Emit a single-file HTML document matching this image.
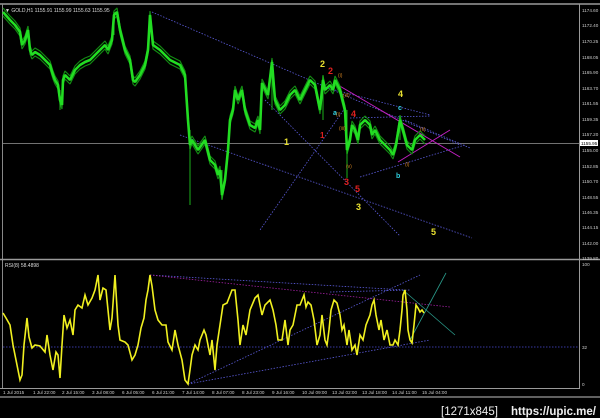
<!DOCTYPE html>
<html><head><style>
body{margin:0;background:#000;width:600px;height:418px;overflow:hidden}
svg{display:block}
text{font-family:"Liberation Sans",sans-serif}
</style></head><body>
<svg width="600" height="418" viewBox="0 0 600 418">
<rect width="600" height="418" fill="#000"/>
<line x1="0" y1="4" x2="600" y2="4" stroke="#9a9a9a" stroke-width="1.5"/>
<line x1="2.5" y1="4" x2="2.5" y2="389" stroke="#888" stroke-width="1"/>
<line x1="579.5" y1="4" x2="579.5" y2="389" stroke="#9a9a9a" stroke-width="1"/>
<line x1="0" y1="259.5" x2="600" y2="259.5" stroke="#9a9a9a" stroke-width="1.5"/>
<line x1="0" y1="388.5" x2="580" y2="388.5" stroke="#9a9a9a" stroke-width="1"/>
<line x1="0" y1="397" x2="600" y2="397" stroke="#9a9a9a" stroke-width="1.2"/>
<line x1="3" y1="143.5" x2="579" y2="143.5" stroke="#999" stroke-width="0.8"/>
<text x="5" y="12" fill="#ddd" font-size="5">▼ GOLD,H1  1155.91 1155.99 1155.63 1155.95</text>
<g stroke="#5a5ad8" stroke-width="0.8" stroke-dasharray="1.5,1.5" fill="none">
<line x1="152" y1="12" x2="460" y2="145"/>
<line x1="180" y1="135" x2="472" y2="238"/>
<line x1="335" y1="90" x2="430" y2="115"/>
<line x1="350" y1="118" x2="430" y2="116"/>
<line x1="360" y1="177" x2="465" y2="145"/>
<line x1="265" y1="100" x2="400" y2="236"/>
<line x1="345" y1="108" x2="260" y2="230"/>
<line x1="405" y1="120" x2="470" y2="148"/>
</g>
<g stroke="#c020c0" stroke-width="1" fill="none">
<line x1="338" y1="85" x2="460" y2="157"/>
<line x1="398" y1="162" x2="450" y2="130"/>
</g>
<g fill="none" stroke-linejoin="bevel">
<polyline stroke="#138a13" stroke-width="1.2" transform="translate(0,4)" points="3,12 10,20 15,25 20,32 22,45 25,40 28,30 30,50 32,55 35,52 40,55 45,60 50,65 53,75 55,80 58,85 60,100 62,105 63,80 65,75 70,80 75,70 80,65 85,62 90,60 95,55 100,50 105,45 108,50 112,40 114,15 117,12 120,30 125,50 130,60 133,80 135,82 140,75 145,65 148,50 150,15 153,45 160,50 170,60 180,65 185,75 188,120 190,145 192,140 198,150 205,140 210,160 215,165 218,175 220,170 222,195 225,180 228,150 230,120 233,110 235,90 238,100 242,90 245,110 250,125 255,128 258,120 260,130 262,83 268,95 272,62 275,100 280,110 285,105 290,95 295,90 300,100 305,90 310,80 315,85 318,100 320,110 323,80 325,90 330,85 333,90 335,80 340,90 345,110 347,150 350,140 352,125 355,130 358,140 360,125 365,120 370,125 372,135 375,130 380,140 385,145 390,150 393,155 396,145 400,120 403,130 407,145 412,150 415,140 420,135 425,140"/>
<polyline stroke="#138a13" stroke-width="1.2" transform="translate(0,-4)" points="3,12 10,20 15,25 20,32 22,45 25,40 28,30 30,50 32,55 35,52 40,55 45,60 50,65 53,75 55,80 58,85 60,100 62,105 63,80 65,75 70,80 75,70 80,65 85,62 90,60 95,55 100,50 105,45 108,50 112,40 114,15 117,12 120,30 125,50 130,60 133,80 135,82 140,75 145,65 148,50 150,15 153,45 160,50 170,60 180,65 185,75 188,120 190,145 192,140 198,150 205,140 210,160 215,165 218,175 220,170 222,195 225,180 228,150 230,120 233,110 235,90 238,100 242,90 245,110 250,125 255,128 258,120 260,130 262,83 268,95 272,62 275,100 280,110 285,105 290,95 295,90 300,100 305,90 310,80 315,85 318,100 320,110 323,80 325,90 330,85 333,90 335,80 340,90 345,110 347,150 350,140 352,125 355,130 358,140 360,125 365,120 370,125 372,135 375,130 380,140 385,145 390,150 393,155 396,145 400,120 403,130 407,145 412,150 415,140 420,135 425,140"/>
<polyline stroke="#22dd22" stroke-width="2.6" points="3,12 10,20 15,25 20,32 22,45 25,40 28,30 30,50 32,55 35,52 40,55 45,60 50,65 53,75 55,80 58,85 60,100 62,105 63,80 65,75 70,80 75,70 80,65 85,62 90,60 95,55 100,50 105,45 108,50 112,40 114,15 117,12 120,30 125,50 130,60 133,80 135,82 140,75 145,65 148,50 150,15 153,45 160,50 170,60 180,65 185,75 188,120 190,145 192,140 198,150 205,140 210,160 215,165 218,175 220,170 222,195 225,180 228,150 230,120 233,110 235,90 238,100 242,90 245,110 250,125 255,128 258,120 260,130 262,83 268,95 272,62 275,100 280,110 285,105 290,95 295,90 300,100 305,90 310,80 315,85 318,100 320,110 323,80 325,90 330,85 333,90 335,80 340,90 345,110 347,150 350,140 352,125 355,130 358,140 360,125 365,120 370,125 372,135 375,130 380,140 385,145 390,150 393,155 396,145 400,120 403,130 407,145 412,150 415,140 420,135 425,140"/>
</g>
<g stroke="#22dd22" stroke-width="0.8">
<line x1="190" y1="130" x2="190" y2="205"/><line x1="222" y1="170" x2="222" y2="200"/><line x1="272" y1="60" x2="272" y2="110"/><line x1="323" y1="75" x2="323" y2="120"/><line x1="347" y1="110" x2="347" y2="178"/><line x1="400" y1="115" x2="400" y2="140"/><line x1="60" y1="90" x2="60" y2="110"/><line x1="114" y1="12" x2="114" y2="35"/>
</g>
<g font-size="9" font-weight="bold">
<text x="320" y="67" fill="#e8e030">2</text><text x="328" y="74" fill="#e02020">2</text>
<text x="398" y="97" fill="#e8e030">4</text><text x="398" y="110" fill="#30d0e0" font-size="7">c</text>
<text x="333" y="115" fill="#30d0e0" font-size="7">a</text><text x="351" y="117" fill="#e02020">4</text>
<text x="284" y="145" fill="#e8e030">1</text><text x="320" y="138" fill="#e02020" font-size="8">1</text>
<text x="344" y="185" fill="#e02020">3</text><text x="355" y="192" fill="#e02020">5</text>
<text x="396" y="178" fill="#30d0e0" font-size="7">b</text>
<text x="356" y="210" fill="#e8e030">3</text><text x="431" y="235" fill="#e8e030">5</text>
</g>
<g font-size="5" fill="#d08020">
<text x="338" y="77">(i)</text><text x="343" y="97">(iii)</text><text x="336" y="116">(i)</text><text x="339" y="130">(iii)</text><text x="346" y="168">(v)</text><text x="420" y="131">(ii)</text><text x="405" y="166">(i)</text>
</g>
<g font-size="4.6" fill="#ccc">
<text x="582" y="12">1174.60</text><text x="582" y="27">1172.40</text><text x="582" y="43">1170.25</text><text x="582" y="59">1168.05</text><text x="582" y="74">1165.90</text><text x="582" y="90">1163.70</text><text x="582" y="105">1161.55</text><text x="582" y="121">1159.35</text><text x="582" y="136">1157.20</text><text x="582" y="152">1155.00</text><text x="582" y="168">1152.85</text><text x="582" y="183">1150.70</text><text x="582" y="199">1148.55</text><text x="582" y="214">1146.35</text><text x="582" y="229">1144.15</text><text x="582" y="245">1142.00</text><text x="582" y="260">1139.80</text>
<text x="582" y="266">100</text><text x="582" y="349">32</text><text x="582" y="386">0</text>
</g>
<rect x="580" y="140" width="18" height="6" fill="#fff"/>
<text x="581" y="145" font-size="4.6" fill="#000">1155.95</text>
<text x="5" y="267" fill="#ddd" font-size="5">RSI(8) 58.4898</text>
<line x1="3" y1="347" x2="579" y2="347" stroke="#4a4ad8" stroke-width="0.8" stroke-dasharray="1.5,1.5"/>
<g stroke="#5a5ad8" stroke-width="0.8" stroke-dasharray="1.5,1.5" fill="none">
<line x1="150" y1="275" x2="405" y2="290"/>
<line x1="188" y1="384" x2="420" y2="275"/>
<line x1="188" y1="384" x2="430" y2="340"/>
<line x1="330" y1="292" x2="410" y2="290"/>
</g>
<line x1="150" y1="275" x2="450" y2="307" stroke="#a020a0" stroke-width="0.8" stroke-dasharray="1.5,1.5"/>
<line x1="403" y1="290" x2="455" y2="335" stroke="#2a9a8a" stroke-width="0.8"/>
<line x1="410" y1="340" x2="446" y2="273" stroke="#2a9a8a" stroke-width="0.8"/>
<polyline fill="none" stroke="#f0f020" stroke-width="1.6" points="3,313 6,318 10,325 13,345 16,360 20,380 22,375 24,345 27,318 29,337 32,348 35,345 40,346 45,352 47,335 50,355 53,370 56,352 58,355 60,378 62,345 64,315 67,328 70,320 73,335 75,310 78,305 82,308 85,295 88,305 92,298 95,290 98,275 100,300 103,288 106,290 110,330 112,318 115,275 118,325 120,340 125,342 128,345 132,360 135,355 138,345 141,328 144,318 146,300 148,290 150,275 152,286 155,310 158,320 162,325 166,325 168,342 172,350 175,330 178,345 182,360 185,380 188,384 190,370 192,355 195,345 198,350 200,340 204,330 206,335 210,355 212,340 215,370 217,345 220,325 223,305 227,303 232,290 235,290 238,320 240,345 243,325 246,335 250,310 255,298 258,295 262,315 265,305 270,300 273,310 276,325 278,340 282,340 285,320 288,345 290,330 293,325 297,305 300,305 302,300 304,295 306,307 308,302 311,305 314,320 317,345 320,335 322,315 325,340 327,345 329,330 331,310 334,300 337,303 340,315 342,330 344,325 347,345 349,330 352,350 355,345 357,355 360,335 363,340 366,325 370,315 372,305 374,300 376,315 379,330 381,320 384,340 387,330 390,345 393,345 395,340 398,345 400,330 402,310 403,295 405,290 407,310 408,330 410,340 412,343 414,325 416,305 418,308 420,312 422,310 424,313"/>
<g font-size="4.6" fill="#ccc">
<text x="3" y="394">1 Jul 2015</text><text x="33" y="394">1 Jul 22:00</text><text x="62" y="394">2 Jul 15:00</text><text x="92" y="394">3 Jul 08:00</text><text x="122" y="394">6 Jul 05:00</text><text x="152" y="394">6 Jul 21:00</text><text x="182" y="394">7 Jul 14:00</text><text x="212" y="394">8 Jul 07:00</text><text x="242" y="394">8 Jul 23:00</text><text x="272" y="394">9 Jul 16:00</text><text x="302" y="394">10 Jul 09:00</text><text x="332" y="394">13 Jul 02:00</text><text x="362" y="394">13 Jul 18:00</text><text x="392" y="394">14 Jul 11:00</text><text x="422" y="394">15 Jul 04:00</text>
</g>
<text x="441" y="415" font-size="11.5" fill="#eee">[1271x845]</text>
<text x="511" y="415" font-size="11.5" fill="#eee" font-weight="bold">https://upic.me/</text>
</svg>
</body></html>
